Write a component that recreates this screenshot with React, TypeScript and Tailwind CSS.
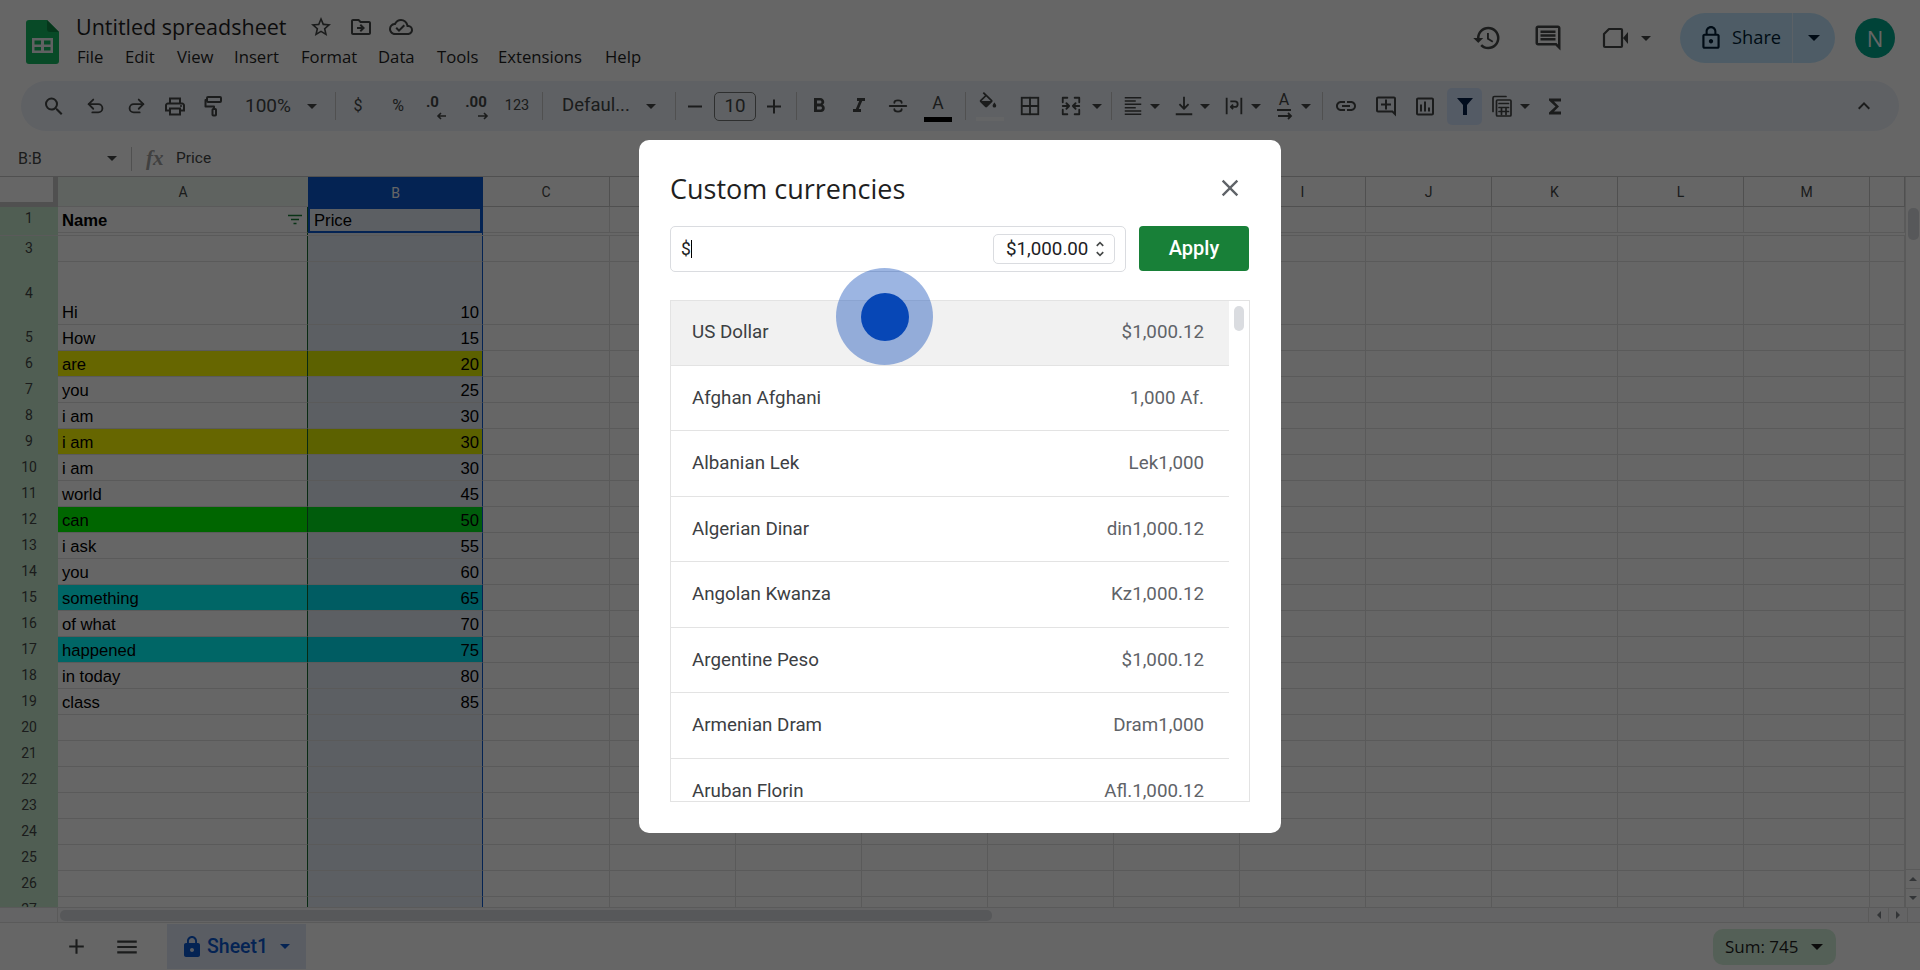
import {
  MdAdd,
  MdClose,
  MdExpandLess,
  MdFormatBold,
  MdFormatItalic,
  MdFunctions,
  MdHistory,
  MdLink,
  MdLockOutline,
  MdMenu,
  MdOutlineAddComment,
  MdOutlineCloudDone,
  MdOutlineDriveFileMove,
  MdOutlineInsertChart,
  MdOutlinePrint,
  MdOutlineStarBorder,
  MdRemove,
  MdSearch,
  MdUnfoldMore,
  MdOutlineComment,
  MdLock,
} from "react-icons/md";

const sans = "font-['Open_Sans',sans-serif]";
const iconColor = "text-[#444746]";

function Icon({ className = "", children }: { className?: string; children: React.ReactNode }) {
  return (
    <div className={`w-[24px] h-[24px] flex items-center justify-center shrink-0 ${iconColor} ${className}`}>
      {children}
    </div>
  );
}

function Caret({ className = "" }: { className?: string }) {
  return (
    <div className={`w-[10px] h-[24px] flex items-center justify-center shrink-0 ${className}`}>
      <div className="w-0 h-0 border-l-[5px] border-r-[5px] border-t-[5px] border-l-transparent border-r-transparent border-t-[#444746]" />
    </div>
  );
}

function Sep({ className = "" }: { className?: string }) {
  return <div className={`w-[1px] h-[28px] bg-[#c7c7c7] shrink-0 ${className}`} />;
}

function Svg({ children, size = 24 }: { children: React.ReactNode; size?: number }) {
  return (
    <svg
      width={size}
      height={size}
      viewBox="0 0 24 24"
      fill="none"
      stroke="currentColor"
      strokeWidth="2"
      strokeLinecap="round"
      strokeLinejoin="round"
    >
      {children}
    </svg>
  );
}

function Logo() {
  return (
    <svg width="33" height="44" viewBox="0 0 33 44" className="shrink-0">
      <path d="M3 0h18l12 12v29a3 3 0 0 1-3 3H3a3 3 0 0 1-3-3V3a3 3 0 0 1 3-3z" fill="#14b862" />
      <path d="M21 0l12 12H24a3 3 0 0 1-3-3z" fill="#0e8a44" />
      <path
        d="M6 18h21v15H6z M8.5 20.5v4h6.5v-4z M18 20.5v4h6.5v-4z M8.5 27v3.5h6.5V27z M18 27v3.5h6.5V27z"
        fill="#f1f3f4"
        fillRule="evenodd"
      />
    </svg>
  );
}

function Toolbar() {
  return (
    <div className="mx-[21px] h-[50px] rounded-[25px] bg-[#edf2fa] flex items-center pl-[21px] pr-[23px]">
      <Icon>
        <MdSearch size={25} />
      </Icon>
      <Icon className="ml-[18px]">
        <Svg size={22}>
          <path d="M9 5L4 10l5 5" />
          <path d="M4 10h10.5a4.5 4.5 0 0 1 0 9H8" />
        </Svg>
      </Icon>
      <Icon className="ml-[16px] -scale-x-100">
        <Svg size={22}>
          <path d="M9 5L4 10l5 5" />
          <path d="M4 10h10.5a4.5 4.5 0 0 1 0 9H8" />
        </Svg>
      </Icon>
      <Icon className="ml-[15px]">
        <MdOutlinePrint size={25} />
      </Icon>
      <Icon className="ml-[15px]">
        <Svg size={24}>
          <rect x="5" y="3" width="14" height="5" rx="1" />
          <path d="M5 6H3.5v6.5H12V15" />
          <rect x="10.5" y="15" width="3.5" height="6.5" rx="0.8" />
        </Svg>
      </Icon>
      <span className="ml-[18px] w-[48px] text-[19px] text-[#444746] font-[Roboto] text-center">100%</span>
      <Caret className="ml-[15px]" />
      <Sep className="ml-[18px]" />
      <span className="ml-[15px] w-[14px] text-[16px] text-[#444746] font-[Roboto] text-center">$</span>
      <span className="ml-[23px] w-[20px] text-[16px] text-[#444746] font-[Roboto] text-center">%</span>
      <div className="ml-[15px] w-[24px] h-[28px] relative text-[#444746] shrink-0">
        <span className="text-[15px] font-bold font-[Roboto] leading-[20px] block pl-[3px]">.0</span>
        <svg width="11" height="8" viewBox="0 0 11 8" className="absolute bottom-0 right-0">
          <path d="M10 4H2M5 1L2 4l3 3" stroke="currentColor" strokeWidth="1.6" fill="none" />
        </svg>
      </div>
      <div className="ml-[15px] w-[28px] h-[28px] relative text-[#444746] shrink-0">
        <span className="text-[15px] font-bold font-[Roboto] leading-[20px] block text-center">.00</span>
        <svg width="12" height="8" viewBox="0 0 12 8" className="absolute bottom-0 right-[1px]">
          <path d="M1 4h9M7 1l3 3-3 3" stroke="currentColor" strokeWidth="1.6" fill="none" />
        </svg>
      </div>
      <span className="ml-[13px] w-[28px] text-[14.5px] text-[#444746] font-[Roboto] text-center">123</span>
      <Sep className="ml-[11px]" />
      <span className="ml-[19px] w-[68px] text-[18.5px] text-[#444746] font-[Roboto] whitespace-nowrap">Defaul...</span>
      <Caret className="ml-[16px]" />
      <Sep className="ml-[19px]" />
      <Icon className="ml-[7px]">
        <MdRemove size={25} />
      </Icon>
      <div className="ml-[7px] w-[42px] h-[29px] rounded-[5px] border border-[#747775] flex items-center justify-center text-[18.75px] text-[#444746] font-[Roboto] shrink-0">
        10
      </div>
      <Icon className="ml-[6px]">
        <MdAdd size={25} />
      </Icon>
      <Sep className="ml-[10px]" />
      <Icon className="ml-[10px]">
        <MdFormatBold size={26} />
      </Icon>
      <Icon className="ml-[16px]">
        <MdFormatItalic size={26} />
      </Icon>
      <Icon className="ml-[15px]">
        <Svg size={22}>
          <path d="M3 12h18" />
          <path d="M8 8.5C8 5 16 5 16 8.5" />
          <path d="M8 15.5C8 19 16 19 16 15.5" />
        </Svg>
      </Icon>
      <div className="ml-[14px] w-[28px] h-[30px] flex flex-col items-center shrink-0 mt-[2px]">
        <span className="text-[17.5px] leading-[22px] text-[#444746] font-[Roboto]">A</span>
        <div className="w-[28px] h-[5px] bg-black mt-[3px]" />
      </div>
      <Sep className="ml-[13px]" />
      <div className="ml-[10px] w-[28px] h-[30px] flex flex-col items-start shrink-0 mt-[2px] text-[#444746]">
        <svg width="22" height="22" viewBox="0 0 24 24" fill="currentColor" className="ml-[1px] -mt-[1px]">
          <path d="M16.6 9.9L7.6 1l-1.4 1.4 2.4 2.4-5.2 5.1a1.5 1.5 0 0 0 0 2.1l5.5 5.5a1.5 1.5 0 0 0 2.1 0l5.6-5.5a1.5 1.5 0 0 0 0-2.1zM5 11l5-5 5 5H5zm14 1.5s-2 2.2-2 3.5a2 2 0 0 0 4 0c0-1.3-2-3.5-2-3.5z" />
        </svg>
        <div className="w-[28px] h-[4px] bg-[#fbfcfe] mt-[4px]" />
      </div>
      <Icon className="ml-[14px]">
        <Svg size={22}>
          <rect x="3" y="3" width="18" height="18" strokeLinejoin="miter" />
          <path d="M12 3v18M3 12h18" />
        </Svg>
      </Icon>
      <Icon className="ml-[17px]">
        <Svg size={22}>
          <path d="M8 3H3v5M16 3h5v5M8 21H3v-5M16 21h5v-5" />
          <path d="M3 12h7M7 9l3 3-3 3M21 12h-7M17 9l-3 3 3 3" />
        </Svg>
      </Icon>
      <Caret className="ml-[9px]" />
      <Sep className="ml-[9px]" />
      <Icon className="ml-[9px]">
        <Svg size={22}>
          <path
            d="M3 3h18M3 6.6h12M3 10.2h18M3 13.8h12M3 17.4h18M3 21h18"
            strokeLinecap="butt"
            strokeWidth="1.6"
          />
        </Svg>
      </Icon>
      <Caret className="ml-[5px]" />
      <Icon className="ml-[12px]">
        <Svg size={22}>
          <path d="M12 2v13M7 10l5 5 5-5M3 21h18" strokeLinecap="butt" />
        </Svg>
      </Icon>
      <Caret className="ml-[4px]" />
      <Icon className="ml-[12px]">
        <Svg size={22}>
          <path d="M4 3v18M20 3v18" strokeLinecap="butt" />
          <path d="M8 7h5a3 3 0 0 1 0 6H9M11 10.5L8.5 13l2.5 2.5" strokeLinecap="butt" />
        </Svg>
      </Icon>
      <Caret className="ml-[5px]" />
      <div className={`ml-[12px] w-[24px] h-[30px] flex flex-col items-center shrink-0 ${iconColor}`}>
        <span className="text-[16px] leading-[18px] font-[Roboto] border-b-2 border-[#444746] w-[14px] text-center -ml-[2px]">
          A
        </span>
        <svg width="16" height="8" viewBox="0 0 16 8" className="mt-[1px]">
          <path d="M1 4h13M11 1l3 3-3 3" stroke="currentColor" strokeWidth="1.8" fill="none" />
        </svg>
      </div>
      <Caret className="ml-[4px]" />
      <Sep className="ml-[11px]" />
      <Icon className="ml-[11px]">
        <MdLink size={26} />
      </Icon>
      <Icon className="ml-[16px]">
        <MdOutlineAddComment size={27} />
      </Icon>
      <Icon className="ml-[15px]">
        <MdOutlineInsertChart size={27} />
      </Icon>
      <div className="ml-[10px] w-[35px] h-[37px] rounded-[5px] bg-[#d3e3fd] flex items-center justify-center shrink-0 text-[#041e49]">
        <svg width="16" height="17" viewBox="0 0 16 17" fill="currentColor">
          <path d="M0 0h16L10 7v10H6V7z" />
        </svg>
      </div>
      <Icon className="ml-[8px]">
        <Svg size={25}>
          <path d="M3 17V3.5A1.5 1.5 0 0 1 4.5 2H16" strokeWidth="1.7" />
          <rect x="6.5" y="5.5" width="14.5" height="16" rx="1" strokeWidth="1.7" />
          <path d="M9 9h9.5M9 13h9.5M9 17h9.5M11.5 13v7M16 13v7" strokeWidth="1.7" />
        </Svg>
      </Icon>
      <Caret className="ml-[6px]" />
      <Icon className="ml-[13px]">
        <MdFunctions size={27} />
      </Icon>
      <Icon className="ml-auto">
        <MdExpandLess size={28} />
      </Icon>
    </div>
  );
}

function Header() {
  const menus = [
    ["File", "w-[48px]"],
    ["Edit", "w-[52px]"],
    ["View", "w-[57px]"],
    ["Insert", "w-[67px]"],
    ["Format", "w-[77px]"],
    ["Data", "w-[59px]"],
    ["Tools", "w-[61px]"],
    ["Extensions", "w-[107px]"],
    ["Help", "w-[40px]"],
  ];
  return (
    <div className="h-[81px] flex pl-[26px] pr-[25px] items-start">
      <div className="mt-[20px]">
        <Logo />
      </div>
      <div className="ml-[17px] mt-[12px] flex flex-col">
        <div className="flex items-center h-[30px]">
          <span className={`${sans} text-[21.5px] text-[#1f1f1f] w-[211px] whitespace-nowrap`}>Untitled spreadsheet</span>
          <div className={`ml-[22px] flex items-center gap-[16px] ${iconColor}`}>
            <MdOutlineStarBorder size={24} />
            <MdOutlineDriveFileMove size={24} />
            <MdOutlineCloudDone size={24} />
          </div>
        </div>
        <div className="flex h-[26px] mt-[2px] items-center pl-[1px]">
          {menus.map(([m, w]) => (
            <span key={m} className={`${sans} text-[16.7px] text-[#1f1f1f] ${w}`}>
              {m}
            </span>
          ))}
        </div>
      </div>
      <div className="ml-auto flex items-center h-[50px] mt-[13px]">
        <div className={`${iconColor} flex items-center gap-[31px]`}>
          <MdHistory size={30} />
          <MdOutlineComment size={30} />
        </div>
        <div className="ml-[39px] text-[#444746]">
          <svg width="27" height="22" viewBox="0 0 27 22" className="block">
            <path
              d="M7 2h12a1 1 0 0 1 1 1v16a1 1 0 0 1-1 1H3a1 1 0 0 1-1-1V7z"
              fill="none"
              stroke="currentColor"
              strokeWidth="2.2"
              strokeLinejoin="round"
            />
            <path d="M21 11l5-6v12z" fill="currentColor" />
          </svg>
        </div>
        <Caret className="ml-[12px]" />
        <div className="ml-[29px] w-[155px] h-[50px] rounded-[25px] bg-[#c2e7ff] flex items-center text-[#001d35]">
          <div className="flex items-center w-[112px] pl-[18px] gap-[8px]">
            <MdLockOutline size={26} />
            <span className={`${sans} text-[18.3px] -mt-[2px]`}>Share</span>
          </div>
          <div className="w-[1px] h-[50px] bg-[#e3f3ff]" />
          <div className="flex-1 flex justify-center">
            <div className="w-0 h-0 border-l-[6px] border-r-[6px] border-t-[6px] border-l-transparent border-r-transparent border-t-[#001d35]" />
          </div>
        </div>
        <div
          className={`ml-[20px] w-[40px] h-[40px] rounded-full bg-[#00a88c] flex items-center justify-center text-[22px] font-medium text-[#ffffff] ${sans}`}
        >
          N
        </div>
      </div>
    </div>
  );
}

function FormulaBar() {
  return (
    <div className="h-[46px] flex items-center pl-[18px] pt-[10px] font-[Roboto] border-b border-[#c7c7c7]">
      <span className="w-[89px] text-[16px] text-[#444746]">B:B</span>
      <Caret />
      <div className="ml-[14px] w-[1px] h-[24px] bg-[#c7c7c7]" />
      <span className="ml-[14px] w-[30px] font-['Liberation_Serif',serif] italic font-bold text-[21px] text-[#a0a0a0]">fx</span>
      <span className="text-[15.5px] text-[#444746]">Price</span>
    </div>
  );
}

const rows: { n: number; name?: string; price?: number; fill?: "y" | "g" | "t"; tall?: boolean }[] = [
  { n: 3 },
  { n: 4, name: "Hi", price: 10, tall: true },
  { n: 5, name: "How", price: 15 },
  { n: 6, name: "are", price: 20, fill: "y" },
  { n: 7, name: "you", price: 25 },
  { n: 8, name: "i am", price: 30 },
  { n: 9, name: "i am", price: 30, fill: "y" },
  { n: 10, name: "i am", price: 30 },
  { n: 11, name: "world", price: 45 },
  { n: 12, name: "can", price: 50, fill: "g" },
  { n: 13, name: "i ask", price: 55 },
  { n: 14, name: "you", price: 60 },
  { n: 15, name: "something", price: 65, fill: "t" },
  { n: 16, name: "of what", price: 70 },
  { n: 17, name: "happened", price: 75, fill: "t" },
  { n: 18, name: "in today", price: 80 },
  { n: 19, name: "class", price: 85 },
  ...[20, 21, 22, 23, 24, 25, 26, 27].map((n) => ({ n })),
];

const fillA = { y: "bg-[#ffff00]", g: "bg-[#00ff00]", t: "bg-[#00ffff]" };
const fillB = { y: "bg-[#e6f200]", g: "bg-[#00e620]", t: "bg-[#00e6f5]" };
const restCols = ["C", "D", "E", "F", "G", "H", "I", "J", "K", "L", "M", ""];
const gridCols = "grid grid-cols-[58px_250px_175px_127px_repeat(10,126px)_35px]";
const line = "border-[#e1e1e1]";
const cellFont = "font-['Liberation_Sans',sans-serif] text-[16.67px] text-black leading-[21px]";
const rowHead = "bg-[#c9ecd0] flex items-center justify-center font-[Roboto] text-[14px] text-[#444746]";

function Empty({ h }: { h: string }) {
  return (
    <>
      {restCols.map((c, i) => (
        <div key={i} className={`${h} border-r border-b ${line}`} />
      ))}
    </>
  );
}

function Sheet() {
  return (
    <div className="flex h-[730px]">
      <div className="w-[1905px] h-[730px] overflow-hidden">
        <div className={`${gridCols} h-[30px] font-[Roboto] text-[14px] text-[#444746]`}>
          <div className="border-r-[5px] border-b-[5px] border-[#c7c7c7]" />
          <div className={`bg-[#edf7ef] border-b ${line} flex items-center justify-center pt-[2px]`}>A</div>
          <div className="bg-[#0b57d0] text-white flex items-center justify-center pt-[2px]">B</div>
          {restCols.map((c, i) => (
            <div key={i} className="border-r border-b border-[#c7c7c7] flex items-center justify-center pt-[2px]">
              {c}
            </div>
          ))}
        </div>
        <div className={gridCols}>
          <div className={`h-[26px] ${rowHead} pb-[3px]`}>1</div>
          <div className={`h-[26px] flex items-end justify-between pl-[4px] pr-[4px] pb-[1px] ${cellFont} font-bold border-r border-r-[#146c2e] border-b ${line}`}>
            <span>Name</span>
            <svg width="16" height="12" viewBox="0 0 16 12" className="mb-[5px] text-[#188038]">
              <path d="M1 1.5h14M4 5.5h8M6.5 9.5h3" stroke="currentColor" strokeWidth="1.6" />
            </svg>
          </div>
          <div className={`h-[26px] flex items-end pl-[4px] ${cellFont} bg-[#e6eef8] border-2 border-[#0b57d0] border-r-[3px]`}>Price</div>
          <Empty h="h-[26px]" />
        </div>
        <div className={`${gridCols} h-[3px] border-b ${line}`}>
          <div className="bg-[#c9ecd0]" />
          <div className="border-r border-r-[#146c2e]" />
          <div className="bg-[#e6eef8] border-r border-r-[#0b57d0]" />
        </div>
        {rows.map((r) => {
          const h = r.tall ? "h-[63px]" : "h-[26px]";
          return (
            <div key={r.n} className={gridCols}>
              <div className={`${h} ${rowHead} ${r.tall ? "" : "pb-[2px]"}`}>{r.n}</div>
              <div
                className={`${h} flex items-end pl-[4px] pb-[1px] ${cellFont} border-r border-r-[#146c2e] border-b ${line} ${r.fill ? fillA[r.fill] : ""}`}
              >
                {r.name}
              </div>
              <div
                className={`${h} flex items-end justify-end pr-[3px] pb-[1px] ${cellFont} border-r border-r-[#0b57d0] border-b ${line} ${r.fill ? fillB[r.fill] : "bg-[#e6eef8]"}`}
              >
                {r.price}
              </div>
              <Empty h={h} />
            </div>
          );
        })}
      </div>
      <div className={`flex-1 border-l ${line} flex flex-col items-center relative`}>
        <div className="mt-[31px] w-[11px] h-[32px] rounded-[5px] bg-[#dadce0]" />
        <div className="mt-auto w-full h-[19px] border-t border-[#e1e1e1] flex items-center justify-center">
          <div className="w-0 h-0 border-l-[4px] border-r-[4px] border-b-[4px] border-l-transparent border-r-transparent border-b-[#80868b]" />
        </div>
        <div className="w-full h-[19px] border-t border-[#e1e1e1] flex items-center justify-center">
          <div className="w-0 h-0 border-l-[4px] border-r-[4px] border-t-[4px] border-l-transparent border-r-transparent border-t-[#80868b]" />
        </div>
      </div>
    </div>
  );
}

function Bottom() {
  return (
    <>
      <div className="h-[16px] flex border-t border-b border-[#e1e1e1] bg-[#f9fbfd]">
        <div className="w-[58px] border-r border-[#e1e1e1]" />
        <div className="ml-[2px] mt-[2px] w-[932px] h-[11px] rounded-[5px] bg-[#dadce0]" />
        <div className="ml-auto w-[52px] flex items-center">
          <div className="w-[20px] h-full flex items-center justify-center border-l border-[#e1e1e1]">
            <div className="w-0 h-0 border-t-[4px] border-b-[4px] border-r-[4px] border-t-transparent border-b-transparent border-r-[#80868b]" />
          </div>
          <div className="w-[20px] h-full flex items-center justify-center border-l border-r border-[#e1e1e1]">
            <div className="w-0 h-0 border-t-[4px] border-b-[4px] border-l-[4px] border-t-transparent border-b-transparent border-l-[#80868b]" />
          </div>
        </div>
      </div>
      <div className="h-[47px] flex items-center">
        <div className={`ml-[64px] ${iconColor}`}>
          <MdAdd size={25} />
        </div>
        <div className={`ml-[25px] ${iconColor}`}>
          <MdMenu size={26} />
        </div>
        <div className="ml-[27px] w-[139px] h-[45px] bg-[#e1e9f7] flex items-center pl-[13px] text-[#0b57d0]">
          <MdLock size={24} />
          <span className="ml-[3px] font-[Roboto] font-medium text-[19.5px]">Sheet1</span>
          <div className="ml-[12px] w-0 h-0 border-l-[5px] border-r-[5px] border-t-[5px] border-l-transparent border-r-transparent border-t-[#0b57d0]" />
        </div>
        <div className="ml-auto mr-[84px] w-[123px] h-[36px] rounded-[10px] bg-[#d3f0da] flex items-center pl-[12px] text-[#1f1f1f]">
          <span className={`${sans} text-[17px]`}>Sum: 745</span>
          <div className="ml-[12px] w-0 h-0 border-l-[6px] border-r-[6px] border-t-[6px] border-l-transparent border-r-transparent border-t-[#1f1f1f]" />
        </div>
      </div>
    </>
  );
}

const currencies = [
  ["US Dollar", "$1,000.12"],
  ["Afghan Afghani", "1,000 Af."],
  ["Albanian Lek", "Lek1,000"],
  ["Algerian Dinar", "din1,000.12"],
  ["Angolan Kwanza", "Kz1,000.12"],
  ["Argentine Peso", "$1,000.12"],
  ["Armenian Dram", "Dram1,000"],
  ["Aruban Florin", "Afl.1,000.12"],
];

function Dialog() {
  return (
    <div className="absolute left-[639px] top-[140px] w-[642px] h-[693px] bg-white rounded-[10px] z-20 pl-[31px] pr-[32px] font-[Roboto]">
      <div className="h-[86px] flex items-center justify-between pt-[26px] pb-[13px]">
        <span className={`${sans} text-[27px] text-[#1f1f1f]`}>Custom currencies</span>
        <div className="text-[#5f6368] mr-[5px] -mt-[4px]">
          <MdClose size={28} />
        </div>
      </div>
      <div className="flex items-start justify-between">
        <div className="w-[456px] h-[46px] rounded-[5px] border border-[#dadce0] flex items-center pl-[10px] pr-[10px]">
          <span className="text-[17.5px] text-[#1f1f1f]">$</span>
          <span className="w-[1px] h-[18px] bg-black" />
          <div className="ml-auto w-[122px] h-[30px] rounded-[5px] border border-[#dadce0] flex items-center pl-[12px] text-[#202124] text-[18.75px] whitespace-nowrap">
            $1,000.00
            <span className="ml-[2px] text-[#444746]">
              <MdUnfoldMore size={20} />
            </span>
          </div>
        </div>
        <div className="w-[110px] h-[45px] rounded-[4px] bg-[#188038] flex items-center justify-center text-white text-[20px] font-medium pb-[2px]">
          Apply
        </div>
      </div>
      <div className="mt-[28px] h-[502px] w-[580px] border border-[#e3e3e3] flex overflow-hidden">
        <div className="w-[558px] shrink-0 -mt-[1px]">
          {currencies.map(([name, value], i) => (
            <div
              key={name}
              className={`h-[65.5px] flex items-center justify-between pl-[21px] pr-[25px] border-b border-[#e3e3e3] text-[18.75px] ${i === 0 ? "bg-[#f1f1f1]" : ""}`}
            >
              <span className="text-[#3c4043]">{name}</span>
              <span className="text-[#5f6368]">{value}</span>
            </div>
          ))}
        </div>
        <div className="flex-1 flex justify-center pt-[5px]">
          <div className="w-[10px] h-[25px] rounded-[5px] bg-[#dadce0]" />
        </div>
      </div>
    </div>
  );
}

function App() {
  return (
    <div className="relative w-[1920px] h-[970px] overflow-hidden bg-white font-[Roboto]">
      <Header />
      <Toolbar />
      <FormulaBar />
      <Sheet />
      <Bottom />
      <div className="absolute inset-0 bg-black/60 z-10" />
      <Dialog />
      <div className="absolute left-[836px] top-[268px] w-[97px] h-[97px] rounded-full bg-[#0747b6]/40 z-30 flex items-center justify-center">
        <div className="w-[48px] h-[48px] rounded-full bg-[#0747b6]" />
      </div>
    </div>
  );
}

export default App;
